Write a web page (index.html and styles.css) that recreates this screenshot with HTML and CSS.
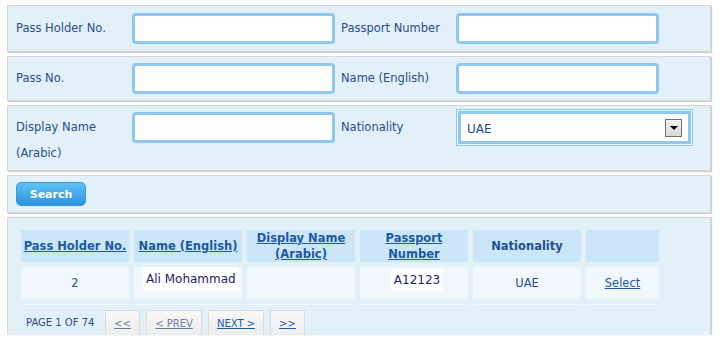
FILE: index.html
```html
<!doctype HTML>
<html>
  <head>
    <title>Pass Holder Search</title>
    <link rel="stylesheet" href="styles.css">
  </head>
  <body>
    <div class="page">
      <div class="panel field-row">
        <label class="label">Pass Holder No.</label>
        <div><input class="text-input" type="text"></div>
        <label class="label">Passport Number</label>
        <div><input class="text-input" type="text"></div>
      </div>
      <div class="panel field-row tight">
        <label class="label">Pass No.</label>
        <div><input class="text-input" type="text"></div>
        <label class="label">Name (English)</label>
        <div><input class="text-input" type="text"></div>
      </div>
      <div class="panel field-row tight">
        <label class="label label-wrap">Display Name (Arabic)</label>
        <div><input class="text-input" type="text"></div>
        <label class="label">Nationality</label>
        <div class="select-outer">
          <div class="select-inner">
            <span class="select-value">UAE</span>
            <span class="select-button"><span class="arrow"></span></span>
          </div>
        </div>
      </div>
      <div class="panel button-row">
        <button class="search-button">Search</button>
      </div>
      <div class="panel results">
        <table class="grid">
          <tr class="grid-head">
            <th class="col-wide"><a href="#">Pass Holder No.</a></th>
            <th class="col-wide"><a href="#">Name (English)</a></th>
            <th class="col-wide"><a href="#">Display Name<br>(Arabic)</a></th>
            <th class="col-wide"><a href="#">Passport<br>Number</a></th>
            <th class="col-wide">Nationality</th>
            <th class="col-narrow"></th>
          </tr>
          <tr class="grid-row">
            <td class="center">2</td>
            <td class="boxed-left"><span class="value-box">Ali Mohammad</span></td>
            <td></td>
            <td class="boxed-center"><span class="value-box small">A12123</span></td>
            <td class="center">UAE</td>
            <td class="center"><a href="#">Select</a></td>
          </tr>
          <tr class="grid-sep">
            <td></td><td></td><td></td><td></td><td></td><td></td>
          </tr>
          <tr>
            <td class="pager-cell" colspan="6">
              <div class="pager">
                <span class="page-count">PAGE 1 OF 74</span>
                <span class="pager-button small-btn disabled"><a href="#">&lt;&lt;</a></span>
                <span class="pager-button disabled"><a href="#">&lt; PREV</a></span>
                <span class="pager-button"><a href="#">NEXT &gt;</a></span>
                <span class="pager-button small-btn"><a href="#">&gt;&gt;</a></span>
              </div>
            </td>
          </tr>
        </table>
      </div>
    </div>
  </body>
</html>
```

FILE: styles.css
```css
body {
  margin: 0;
  padding: 0;
  font-family: 'DejaVu Sans', Verdana, sans-serif;
  font-size: 11.5px;
  color: #2b4d8c;
  background-color: #fff;
}
.page {
  width: 704px;
  padding: 5px 0 0 7px;
}
.panel {
  background-color: #e2f0fa;
  border: 1px solid #d6d6d6;
  box-shadow: 1px 1px 1px #cfcfcf;
  margin-bottom: 4px;
}
.field-row {
  display: grid;
  grid-template-columns: 116px 209px 115px 1fr;
  align-items: start;
  padding: 7px 0 7px 8px;
}
.field-row.tight {
  padding: 6px 0 6px 8px;
}
.label {
  line-height: 26px;
  padding-top: 2px;
  margin-bottom: -2px;
  color: #2b4d8c;
}
.label-wrap {
  padding-right: 20px;
}
.text-input {
  box-sizing: border-box;
  width: 203px;
  height: 31px;
  margin: 0;
  border: 3px solid #8ec8ee;
  border-radius: 4px;
  background-color: #fff;
  outline: none;
}

.select-outer {
  box-sizing: border-box;
  width: 237px;
  height: 37px;
  margin-top: -3px;
  border: 1px solid #8ec8ee;
  padding: 1px;
  background-color: #eaf5fd;
}
.select-inner {
  box-sizing: border-box;
  height: 33px;
  border: 3px solid #8ec8ee;
  background-color: #fff;
  display: flex;
  align-items: center;
  justify-content: space-between;
  padding: 0 6px 0 6px;
}
.select-value {
  font-size: 12px;
  color: #1f4a8a;
  padding-top: 2px;
}
.select-button {
  box-sizing: border-box;
  width: 17px;
  height: 18px;
  border: 1px solid #6f6f6f;
  background: linear-gradient(#f4f4f4, #d8d8d8);
  display: flex;
  align-items: center;
  justify-content: center;
}
.arrow {
  width: 0;
  height: 0;
  border-left: 4px solid transparent;
  border-right: 4px solid transparent;
  border-top: 4px solid #000;
}

.button-row {
  padding: 6px 8px 6px 8px;
}
.search-button {
  display: block;
  width: 70px;
  height: 24px;
  margin: 0;
  border: 1px solid #3a98dc;
  border-radius: 5px;
  background: linear-gradient(#5ec2f6, #2b93df);
  color: #fff;
  font-family: 'DejaVu Sans', Verdana, sans-serif;
  font-size: 11px;
  font-weight: bold;
}

.results {
  overflow: hidden;
  border-bottom: none;
  box-shadow: 1px 0 1px #cfcfcf;
  padding: 7px 0 0 8px;
  box-sizing: border-box;
  height: 118px;
}
.grid {
  border-collapse: separate;
  border-spacing: 5px;
}
.grid td, .grid th {
  padding: 0;
}
.col-wide {
  width: 108px;
}
.col-narrow {
  width: 73px;
}
.grid-head th {
  height: 32px;
  background-color: #cce6f9;
  font-weight: bold;
  line-height: 16px;
  color: #24508f;
  text-align: center;
}
.grid a {
  color: #1b58a6;
}
.grid-row td {
  height: 32px;
  background-color: #f1f8fd;
  vertical-align: middle;
}
.center {
  text-align: center;
  padding-top: 2px;
}
.grid-row td.boxed-left {
  vertical-align: top;
  padding-left: 9px;
}
.grid-row td.boxed-center {
  vertical-align: top;
  text-align: center;
  padding-left: 6px;
}
.value-box {
  display: inline-block;
  background-color: #fff;
  font-size: 12px;
  line-height: 16px;
  padding: 4px 3px;
  color: #1d1c6a;
}
.value-box.small {
  margin-top: 2px;
  padding: 3px 3px;
}
.grid-sep td {
  height: 1px;
  background-color: #f3f9fe;
}
.pager {
  display: flex;
  align-items: flex-start;
  gap: 6px;
}
.page-count {
  width: 73px;
  padding: 7px 0 0 5px;
  font-size: 10px;
  color: #2b4d8c;
}
.pager-button {
  box-sizing: border-box;
  width: 56px;
  height: 28px;
  border: 1px solid #dcdcdc;
  background: linear-gradient(#f8f8f8, #ececec);
  display: flex;
  justify-content: center;
  padding-top: 7px;
  font-size: 10px;
}
.pager-button.small-btn {
  width: 35px;
}
.pager-button.disabled a {
  color: #6d7e9e;
}
```
